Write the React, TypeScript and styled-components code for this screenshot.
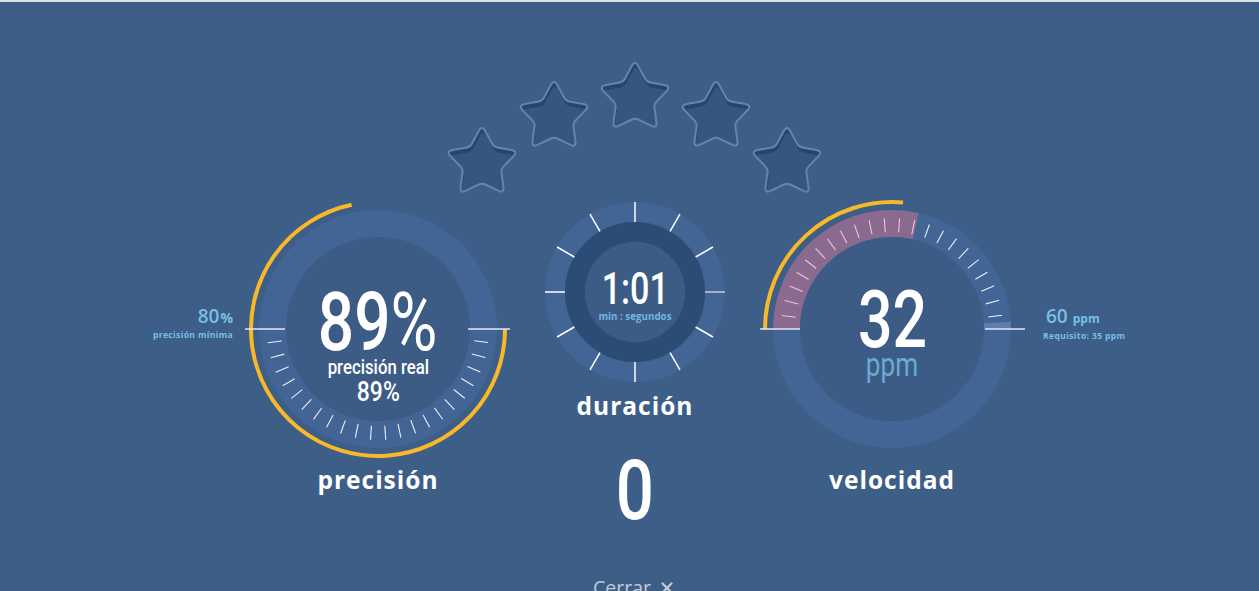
import React, { useId } from 'react'
import styled, { createGlobalStyle } from 'styled-components'
import { X } from 'lucide-react'

const GlobalStyle = createGlobalStyle`
  html, body { margin: 0; padding: 0; }
  body {
    background: #3d5e87;
    font-family: "Open Sans", Roboto, sans-serif;
    overflow: hidden;
  }
`

const RING = '#436596'
const FACE = '#3c5c85'
const YELLOW = '#f8b829'
const LIGHT_BLUE = '#78bfe6'

const pt = (cx: number, cy: number, r: number, deg: number) => {
  const a = (deg * Math.PI) / 180
  return [cx + r * Math.cos(a), cy + r * Math.sin(a)]
}

const arc = (cx: number, cy: number, r: number, a0: number, a1: number) => {
  const [x0, y0] = pt(cx, cy, r, a0)
  const [x1, y1] = pt(cx, cy, r, a1)
  const large = a1 - a0 > 180 ? 1 : 0
  return `M ${x0} ${y0} A ${r} ${r} 0 ${large} 1 ${x1} ${y1}`
}

const range = (from: number, step: number, count: number) =>
  Array.from({ length: count }, (_, i) => from + i * step)

// rounded five point star
const roundedStar = (cx: number, cy: number, R: number, r: number, dOut: number, dIn: number) => {
  const pts = range(-90, 36, 10).map((a, i) => pt(cx, cy, i % 2 === 0 ? R : r, a))
  let d = ''
  pts.forEach((v, i) => {
    const p = pts[(i + 9) % 10]
    const n = pts[(i + 1) % 10]
    const k = i % 2 === 0 ? dOut : dIn
    const lp = Math.hypot(p[0] - v[0], p[1] - v[1])
    const ln = Math.hypot(n[0] - v[0], n[1] - v[1])
    const a = [v[0] + ((p[0] - v[0]) * k) / lp, v[1] + ((p[1] - v[1]) * k) / lp]
    const b = [v[0] + ((n[0] - v[0]) * k) / ln, v[1] + ((n[1] - v[1]) * k) / ln]
    d += `${i === 0 ? 'M' : 'L'} ${a[0]} ${a[1]} Q ${v[0]} ${v[1]} ${b[0]} ${b[1]} `
  })
  return d + 'Z'
}

const STAR_PATH = roundedStar(36, 36, 38, 20, 7, 3.5)

const Page = styled.div`
  height: 591px;
  border-top: 2px solid #dde2e8;
  box-sizing: border-box;
  overflow: hidden;
`

const StarsRow = styled.div`
  display: flex;
  justify-content: center;
  align-items: flex-start;
  padding: 60px 0 0 9px;
  height: 131px;
`

const StarBox = styled.div<{ $drop: number; $shift: number }>`
  width: 72px;
  height: 70px;
  margin-top: ${(p) => p.$drop}px;
  margin-left: ${(p) => p.$shift}px;
  svg { display: block; overflow: visible; }
`

const Board = styled.div`
  display: grid;
  grid-template-columns: 243px 270px 244px 270px 1fr;
  align-items: start;
  margin-top: 1px;
`

const SideNote = styled.div<{ $side: 'left' | 'right' }>`
  height: 270px;
  box-sizing: border-box;
  display: flex;
  flex-direction: column;
  justify-content: center;
  align-items: ${(p) => (p.$side === 'left' ? 'flex-end' : 'flex-start')};
  padding: ${(p) => (p.$side === 'left' ? '0 10px 12px 0' : '0 0 12px 16px')};
  color: ${LIGHT_BLUE};
  font-family: "Open Sans", sans-serif;
  font-weight: 700;
`

const NoteValue = styled.div<{ $indent?: number }>`
  font-size: 19px;
  line-height: 22px;
  font-weight: 600;
  padding-left: ${(p) => p.$indent ?? 0}px;
  small { font-size: ${(p) => (p.$indent ? 12 : 14)}px; font-weight: 700; margin-left: ${(p) => (p.$indent ? 5 : 1)}px; }
`

const NoteCaption = styled.div`
  font-size: 8.6px;
  line-height: 12px;
  letter-spacing: 0.35px;
`

const Column = styled.div`
  display: flex;
  flex-direction: column;
  align-items: center;
`

const Dial = styled.div<{ $size: number; $top?: number }>`
  position: relative;
  width: ${(p) => p.$size}px;
  height: ${(p) => p.$size}px;
  margin-top: ${(p) => p.$top ?? 0}px;
  svg { display: block; overflow: visible; }
`

const DialFace = styled.div<{ $pad: number }>`
  position: absolute;
  inset: 0;
  display: flex;
  flex-direction: column;
  align-items: center;
  padding-top: ${(p) => p.$pad}px;
`

const Cond = styled.div<{ $size: number; $sx: number; $color?: string; $weight?: number; $gap?: number }>`
  font-family: Roboto, sans-serif;
  font-size: ${(p) => p.$size}px;
  line-height: 1;
  font-weight: ${(p) => p.$weight ?? 500};
  color: ${(p) => p.$color ?? '#fff'};
  transform: scaleX(${(p) => p.$sx});
  white-space: nowrap;
  margin-top: ${(p) => p.$gap ?? 0}px;
  span { font-weight: 400; }
`

const Unit = styled.div`
  font-family: "Open Sans", sans-serif;
  font-size: 9.8px;
  line-height: 10px;
  font-weight: 700;
  color: #6fb6e0;
  margin-top: 1px;
`

const Title = styled.div<{ $gap: number }>`
  font-family: "Open Sans", sans-serif;
  font-size: 24.5px;
  line-height: 30px;
  font-weight: 700;
  letter-spacing: 1px;
  color: #fff;
  margin-top: ${(p) => p.$gap}px;
`

const Footer = styled.div`
  display: flex;
  justify-content: center;
  align-items: center;
  gap: 7px;
  padding-left: 10px;
  margin-top: 45px;
  color: #c3cad6;
  font-family: "Open Sans", sans-serif;
  font-size: 19.5px;
  line-height: 1;
`

const Star = ({ drop, shift }: { drop: number; shift: number }) => {
  const id = useId().replace(/:/g, '')
  return (
    <StarBox $drop={drop} $shift={shift}>
      <svg width="72" height="70" viewBox="0 0 72 70">
        <defs>
          <clipPath id={`c${id}`}>
            <path d={STAR_PATH} />
          </clipPath>
        </defs>
        <path d={STAR_PATH} fill="#26446c" />
        <g clipPath={`url(#c${id})`}>
          <path d={STAR_PATH} fill="#35567e" transform="translate(1 5)" />
        </g>
        <path d={STAR_PATH} fill="none" stroke="#6584ad" strokeWidth="2" />
      </svg>
    </StarBox>
  )
}

const Ticks = ({ cx, cy, r0, r1, angles, color, width = 1.1 }: {
  cx: number; cy: number; r0: number; r1: number; angles: number[]; color: (a: number) => string; width?: number
}) => (
  <g>
    {angles.map((a) => {
      const [x0, y0] = pt(cx, cy, r0, a)
      const [x1, y1] = pt(cx, cy, r1, a)
      return <line key={a} x1={x0} y1={y0} x2={x1} y2={y1} stroke={color(a)} strokeWidth={width} />
    })}
  </g>
)

const PrecisionDial = () => (
  <Dial $size={270}>
    <svg width="270" height="270">
      <circle cx="135" cy="135" r="105.5" fill="none" stroke={RING} strokeWidth="27" />
      <circle cx="135" cy="135" r="92" fill={FACE} />
      <Ticks cx={135} cy={135} r0={97} r1={111} angles={range(7, 7.9, 22)} color={() => 'rgba(255,255,255,0.9)'} />
      <path d={arc(135, 135, 127, 0, 258)} fill="none" stroke={YELLOW} strokeWidth="4" />
      <line x1="2" y1="135" x2="42" y2="135" stroke="#e3e8ee" strokeWidth="1.5" />
      <line x1="225" y1="135" x2="267" y2="135" stroke="#e3e8ee" strokeWidth="1.5" />
    </svg>
    <DialFace $pad={87}>
      <Cond $size={82} $sx={0.78}>89<span>%</span></Cond>
      <Cond $size={21} $sx={0.8} $gap={-6}>precisión real</Cond>
      <Cond $size={27} $sx={0.85} $gap={1}>89%</Cond>
    </DialFace>
  </Dial>
)

const DurationDial = () => (
  <Dial $size={184} $top={6}>
    <svg width="184" height="184">
      <circle cx="92" cy="92" r="90" fill={RING} />
      <circle cx="92" cy="92" r="60" fill="none" stroke="#2b4c74" strokeWidth="20" />
      <circle cx="92" cy="92" r="50" fill={FACE} />
      <Ticks cx={92} cy={92} r0={70} r1={90} angles={range(0, 30, 12)} width={1.5}
        color={(a) => (a === 0 ? '#c3cad4' : '#ffffff')} />
    </svg>
    <DialFace $pad={66}>
      <Cond $size={45} $sx={0.76}>1:01</Cond>
      <Unit>min : segundos</Unit>
    </DialFace>
  </Dial>
)

const SpeedDial = () => (
  <Dial $size={270}>
    <svg width="270" height="270">
      <circle cx="135" cy="135" r="105.5" fill="none" stroke={RING} strokeWidth="27" />
      <path d={arc(135, 135, 105.5, 180, 283)} fill="none" stroke="#8a6a8e" strokeWidth="27" />
      <path d={arc(135, 135, 105.5, 356.5, 360)} fill="none" stroke="#5a80b0" strokeWidth="27" />
      <circle cx="135" cy="135" r="92" fill={FACE} />
      <Ticks cx={135} cy={135} r0={97} r1={111} angles={range(187, 7.9, 22)}
        color={(a) => (a < 283 ? '#f3c4d6' : 'rgba(255,255,255,0.9)')} />
      <path d={arc(135, 135, 127, 180, 275)} fill="none" stroke={YELLOW} strokeWidth="4" />
      <line x1="3" y1="135" x2="43" y2="135" stroke="#e3e8ee" strokeWidth="1.5" />
      <line x1="228" y1="135" x2="268" y2="135" stroke="#e3e8ee" strokeWidth="1.5" />
    </svg>
    <DialFace $pad={86}>
      <Cond $size={80} $sx={0.76}>32</Cond>
      <Cond $size={34} $sx={0.77} $color="#6aaad6" $weight={400} $gap={-13}>ppm</Cond>
    </DialFace>
  </Dial>
)

const stars = [
  { drop: 65, shift: 0 },
  { drop: 19, shift: 0 },
  { drop: 0, shift: 9 },
  { drop: 19, shift: 9 },
  { drop: 65, shift: -1 },
]

export default function App() {
  return (
    <Page>
      <GlobalStyle />
      <StarsRow>
        {stars.map((s, i) => (
          <Star key={i} drop={s.drop} shift={s.shift} />
        ))}
      </StarsRow>

      <Board>
        <SideNote $side="left">
          <NoteValue>80<small>%</small></NoteValue>
          <NoteCaption>precisión mínima</NoteCaption>
        </SideNote>

        <Column>
          <PrecisionDial />
          <Title $gap={1}>precisión</Title>
        </Column>

        <Column>
          <DurationDial />
          <Title $gap={7}>duración</Title>
          <Cond $size={84} $sx={0.8} $gap={28}>0</Cond>
        </Column>

        <Column>
          <SpeedDial />
          <Title $gap={1}>velocidad</Title>
        </Column>

        <SideNote $side="right">
          <NoteValue $indent={3}>60<small>ppm</small></NoteValue>
          <NoteCaption>Requisito: 35 ppm</NoteCaption>
        </SideNote>
      </Board>

      <Footer>
        Cerrar
        <X size={18} strokeWidth={3} />
      </Footer>
    </Page>
  )
}
